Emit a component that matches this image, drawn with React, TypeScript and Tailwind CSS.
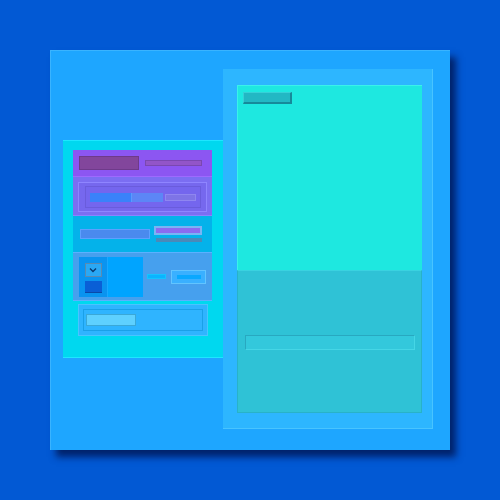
export default function App() {
  return (
    <div className="w-[500px] h-[500px] bg-[#0259d4] pt-[50px] pl-[50px]">
      <div className="w-[400px] h-[400px] bg-[#1ea6ff] border-t border-l border-[#3ab4ff] shadow-[6px_7px_7px_rgba(0,20,80,0.8)] flex pt-[18px] pl-[12px]">
        <div className="mt-[71px] w-[160px] h-[218px] bg-[#00d8ef] border-t border-b border-[#1ee6ff] pt-[9px] px-[10px]">
          <div className="w-[139px]">
            <div className="h-[27px] bg-[#8c56f2] flex items-center px-[6px] gap-[6px] border-b border-[#9d6aff]">
              <div className="w-[60px] h-[14px] bg-[#82469c] border border-[#6e3a8a]" />
              <div className="w-[57px] h-[6px] bg-[#9255c8] border border-[#7a48b0]" />
            </div>
            <div className="h-[39px] bg-[#7b6ef2] px-[5px] pt-[5px] border-b border-[#8a82ff]">
              <div className="w-[129px] h-[30px] border border-[#8f85ff] bg-[#7668ee] px-[6px] pt-[3px]">
                <div className="w-[116px] h-[22px] border border-[#6a5cdc] bg-[#7466ee] flex items-center px-[4px]">
                  <div className="w-[42px] h-[9px] bg-[#3a82fa] border-r border-[#5a9aff]" />
                  <div className="w-[31px] h-[9px] bg-[#5c86f6]" />
                  <div className="ml-[2px] w-[31px] h-[7px] bg-[#7e74e6] border border-[#8f86f0]" />
                </div>
              </div>
            </div>
            <div className="h-[36px] bg-[#04b2ea] flex items-center px-[7px] gap-[4px]">
              <div className="w-[70px] h-[10px] bg-[#4a8aee] border border-[#5ea0ff]" />
              <div className="flex flex-col gap-[3px]">
                <div className="w-[48px] h-[9px] bg-[#8a6cf0] border-2 border-[#7ab4f4]" />
                <div className="w-[46px] h-[4px] bg-[#4a8ab8] ml-[2px]" />
              </div>
            </div>
            <div className="h-[49px] bg-[#46a0ee] border-t border-b border-[#5cb0ff] flex items-center px-[6px]">
              <div className="w-[64px] h-[40px] bg-[#00a4ff] flex">
                <div className="w-[29px] h-full bg-[#0a94f0] flex flex-col items-center pt-[6px] gap-[4px] border-r border-[#1aa8ff]">
                  <div className="w-[17px] h-[14px] bg-[#2aa8f4] border border-[#5a8ab0] flex items-center justify-center">
                    <svg width="8" height="6" viewBox="0 0 8 6">
                      <path d="M1 1.5 L4 4.5 L7 1.5" stroke="#0a3a70" strokeWidth="1.4" fill="none" />
                    </svg>
                  </div>
                  <div className="w-[17px] h-[12px] bg-[#0a5fd6] border-b border-[#0a4aa8]" />
                </div>
              </div>
              <div className="ml-[4px] w-[19px] h-[5px] bg-[#0ab4ff] border border-[#14c4ff]" />
              <div className="ml-[5px] w-[35px] h-[14px] bg-[#3ab0ff] border border-[#62c4ff] flex items-center justify-center">
                <div className="w-[24px] h-[4px] bg-[#0aa8ff]" />
              </div>
            </div>
            <div className="mt-[3px] ml-[5px] w-[130px] h-[32px] bg-[#2fb4ff] border border-[#4ac4ff] p-[4px]">
              <div className="w-full h-full border border-[#1aa0e8] flex items-center pl-[2px]">
                <div className="w-[50px] h-[12px] bg-[#5ed0ff] border border-[#3aa8d8]" />
              </div>
            </div>
          </div>
        </div>
        <div className="w-[210px] h-[360px] bg-[#2db6ff] border-r border-b border-[#48c4ff] pt-[16px] pl-[14px]">
          <div className="w-[185px] h-[328px] flex flex-col">
            <div className="h-[185px] bg-[#1ee8e0] border-t border-l border-[#3af2ea] pt-[6px] pl-[5px]">
              <div className="w-[49px] h-[12px] bg-[#22b8c4] border-b-2 border-r-2 border-[#168a9a] border-t border-l border-t-[#36d0d8] border-l-[#36d0d8]" />
            </div>
            <div className="flex-1 bg-[#2fc2d6] border border-[#28b2c8] border-t-[#3ad2e0] pt-[64px] pl-[7px]">
              <div className="w-[170px] h-[15px] bg-[#33c8dc] border border-[#45d6e6] border-t-[#28a8c0] border-l-[#28a8c0]" />
            </div>
          </div>
        </div>
      </div>
    </div>
  )
}
